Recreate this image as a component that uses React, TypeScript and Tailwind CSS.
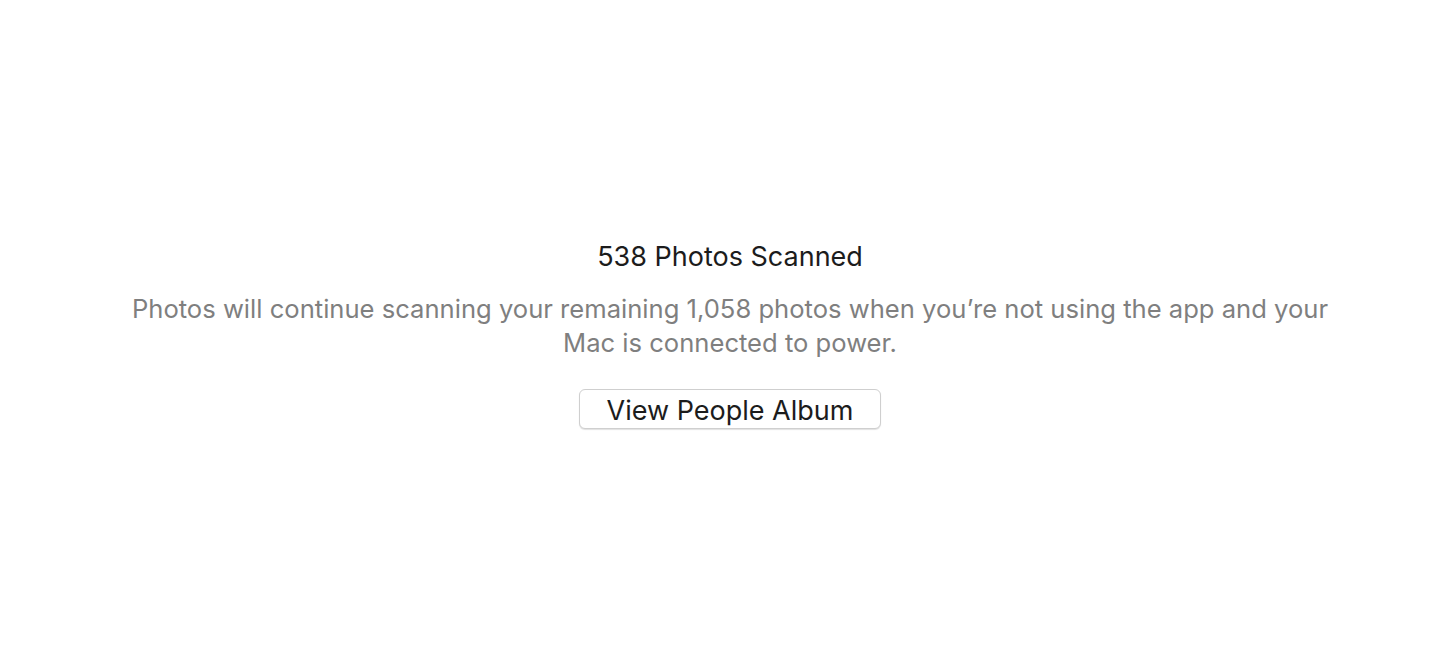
export default function App() {
  return (
    <div className="flex h-screen w-full flex-col items-center justify-center bg-white pb-[2px] pl-[26px] font-['Inter','Noto_Sans',sans-serif] antialiased">
      <h1 className="text-[27px] leading-[30px] font-normal text-[#1c1c1c]">
        538 Photos Scanned
      </h1>
      <p className="mt-[20px] text-center text-[25.6px] leading-[34px] text-[#7f7f7f]">
        Photos will continue scanning your remaining 1,058 photos when you’re not using the app and your
        <br />
        Mac is connected to power.
      </p>
      <button className="mt-[29px] h-[40px] w-[302px] rounded-[6px] border border-[#cfcfcf] bg-white pt-[3px] text-[27px] leading-[35px] text-[#1c1c1c] shadow-[0_1px_1px_rgba(0,0,0,0.12)]">
        View People Album
      </button>
    </div>
  );
}
